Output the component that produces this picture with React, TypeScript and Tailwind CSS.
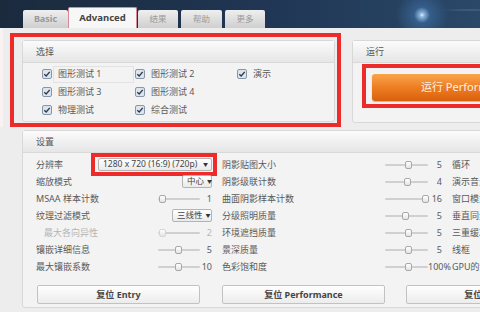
import React from 'react';

const FONT = "font-['Noto_Sans','Noto_Sans_CJK_SC',sans-serif]";

const Check = () => (
  <span className="flex h-[10px] w-[10px] shrink-0 items-center justify-center rounded-[2px] border border-[#8796a8] bg-[#dde4ec]">
    <svg viewBox="0 0 10 10" className="h-[8px] w-[8px]">
      <path d="M1.6 5.2 L4 7.4 L8.4 2.3" fill="none" stroke="#2b3a4f" strokeWidth="1.7" />
    </svg>
  </span>
);

type PanelProps = { title: string; className?: string; children?: React.ReactNode };

const Panel = ({ title, className = '', children }: PanelProps) => (
  <div className={`flex shrink-0 flex-col rounded-[3px] border border-[#d8d8d8] bg-[#f3f3f3] ${className}`}>
    <div className="flex h-[22px] shrink-0 items-center border-b border-[#d9d9d9] bg-gradient-to-b from-[#fbfbfb] to-[#e6e6e6] pl-[13px] text-[9px] text-[#555]">
      {title}
    </div>
    {children}
  </div>
);

const Slider = ({ track, pos, disabled }: { track: string; pos: number; disabled?: boolean }) => (
  <div className={`relative flex h-[10px] shrink-0 items-center ${track}`}>
    <div className="h-[2px] w-full rounded-full bg-[#d0d0d0]" />
    <div
      className={`absolute top-[1px] h-[8px] w-[7px] rounded-[2px] border bg-gradient-to-b from-white to-[#e4e4e4] ${disabled ? 'border-[#d5d5d5]' : 'border-[#a8a8a8]'}`}
      style={{ left: pos }}
    />
  </div>
);

const Dropdown = ({ text, w }: { text: string; w: string }) => (
  <div className={`flex h-[13px] shrink-0 items-center justify-between gap-[3px] whitespace-nowrap rounded-[2px] border border-[#b4b4b4] bg-gradient-to-b from-white to-[#eaeaea] pl-[4px] pr-[3px] text-[8.5px] text-[#444] ${w}`}>
    <span>{text}</span>
    <span className="text-[5px] text-[#333]">▼</span>
  </div>
);

type Col1 =
  | { label: string; kind: 'drop'; text: string; w: string; red?: boolean }
  | { label: string; kind: 'slider'; pos: number; value: string; disabled?: boolean };

const col1: Col1[] = [
  { label: '分辨率', kind: 'drop', text: '1280 x 720 (16:9) (720p)', w: 'w-[114px]', red: true },
  { label: '缩放模式', kind: 'drop', text: '中心', w: 'w-[30px]' },
  { label: 'MSAA 样本计数', kind: 'slider', pos: 1, value: '1' },
  { label: '纹理过滤模式', kind: 'drop', text: '三线性', w: 'w-[40px]' },
  { label: '最大各向异性', kind: 'slider', pos: 1, value: '2', disabled: true },
  { label: '镶嵌详细信息', kind: 'slider', pos: 17, value: '5' },
  { label: '最大镶嵌系数', kind: 'slider', pos: 17, value: '10' },
];

const col2 = [
  { label: '阴影贴图大小', pos: 20, value: '5' },
  { label: '阴影级联计数', pos: 19, value: '4' },
  { label: '曲面阴影样本计数', pos: 37, value: '16' },
  { label: '分级照明质量', pos: 17, value: '5' },
  { label: '环境遮挡质量', pos: 20, value: '5' },
  { label: '景深质量', pos: 20, value: '5' },
  { label: '色彩饱和度', pos: 20, value: '100%' },
];

const col3 = ['循环', '演示音量', '窗口模式', '垂直同步', '三重缓冲', '线框', 'GPU的计时'];

const TopBar = () => (
  <div className="flex h-[28px] items-end bg-[radial-gradient(circle_at_422px_15px,#eaf4ff_0px,#8fb8e0_2px,rgba(70,125,185,0.45)_8px,transparent_26px),radial-gradient(ellipse_at_470px_10px,rgba(120,150,170,0.45)_0px,transparent_30px),linear-gradient(90deg,#1b2a3d,#203654_55%,#2a4868)] pl-[23px]">
    <div className="flex h-[18px] w-[45px] items-center justify-center rounded-t-[2px] bg-gradient-to-b from-[#efefef] to-[#cfcfcf] text-[9px] font-bold text-[#9a9a9a]">
      Basic
    </div>
    <div className="flex h-[21px] w-[69px] items-center justify-center rounded-t-[2px] border border-b-0 border-[#d48a98] bg-[#f7f7f7] text-[9.5px] font-bold text-[#444]">
      Advanced
    </div>
    <div className="ml-[1px] flex h-[18px] w-[40px] items-center justify-center rounded-t-[2px] bg-gradient-to-b from-[#efefef] to-[#cfcfcf] text-[8.5px] text-[#9a9a9a]">
      结果
    </div>
    <div className="ml-[3px] flex h-[18px] w-[41px] items-center justify-center rounded-t-[2px] bg-gradient-to-b from-[#efefef] to-[#cfcfcf] text-[8.5px] text-[#9a9a9a]">
      帮助
    </div>
    <div className="ml-[3px] flex h-[18px] w-[40px] items-center justify-center rounded-t-[2px] bg-gradient-to-b from-[#efefef] to-[#cfcfcf] text-[8.5px] text-[#9a9a9a]">
      更多
    </div>
  </div>
);

const ResetButton = ({ text, className = '' }: { text: string; className?: string }) => (
  <div className={`flex h-[19px] w-[163px] shrink-0 items-center justify-center rounded-[2px] border border-[#c2c2c2] bg-gradient-to-b from-white to-[#ececec] text-[9px] font-bold text-[#454545] ${className}`}>
    {text}
  </div>
);

export default function App() {
  return (
    <div className={`h-[312px] w-[480px] overflow-hidden bg-[#ededed] ${FONT}`}>
      <TopBar />
      <div className="flex items-start border-l-[3px] border-[#f8f2f2]">
        <div className="ml-[7px] mt-[5px] h-[94px] w-[331px] shrink-0 border-4 border-[#ee2b2b] pb-[1px] pl-[8px] pr-[2px] pt-[3px]">
          <Panel title="选择" className="h-full">
            <div className="flex flex-col pl-[19px] pt-[2px] text-[9px] text-[#5a5a5a]">
              <div className="flex h-[18px] items-center">
                <div className="flex w-[93px] items-center">
                  <Check />
                  <span className="ml-[1px] flex h-[17px] w-[81px] items-center border border-[#e2e2e2] pl-[4px]">图形测试 1</span>
                </div>
                <div className="flex w-[102px] items-center gap-[6px]">
                  <Check />
                  <span>图形测试 2</span>
                </div>
                <div className="flex items-center gap-[6px]">
                  <Check />
                  <span>演示</span>
                </div>
              </div>
              <div className="flex h-[18px] items-center">
                <div className="flex w-[93px] items-center gap-[6px]">
                  <Check />
                  <span>图形测试 3</span>
                </div>
                <div className="flex items-center gap-[6px]">
                  <Check />
                  <span>图形测试 4</span>
                </div>
              </div>
              <div className="flex h-[18px] items-center">
                <div className="flex w-[93px] items-center gap-[6px]">
                  <Check />
                  <span>物理测试</span>
                </div>
                <div className="flex items-center gap-[6px]">
                  <Check />
                  <span>综合测试</span>
                </div>
              </div>
            </div>
          </Panel>
        </div>
        <Panel title="运行" className="ml-[11px] mt-[12px] h-[83px] w-[200px]">
          <div className="ml-[9px] mt-[1px] h-[44px] border-4 border-[#ee2b2b] pl-[6px] pt-[6px]">
            <div className="flex h-[27px] w-[190px] items-center justify-center rounded-[3px] bg-gradient-to-b from-[#f8a54a] via-[#ee7d22] to-[#d9600c] text-[11px] text-[#fff1e6] shadow-[0_1px_1px_rgba(0,0,0,0.25)]">
              运行 Performance
            </div>
          </div>
        </Panel>
      </div>
      <Panel title="设置" className="ml-[22px] mt-[3px] h-[178px] w-[500px]">
        <div className="flex flex-col pl-[13px] pt-[3px] text-[9px] text-[#5a5a5a]">
          {col1.map((c, i) => (
            <div key={i} className="flex h-[17px] items-center">
              <div className="flex w-[176px] shrink-0 items-center justify-between">
                <span className={`whitespace-nowrap ${c.kind === 'slider' && c.disabled ? 'pl-[8px] text-[#b5b5b5]' : ''}`}>{c.label}</span>
                {c.kind === 'drop' ? (
                  <div className="relative">
                    <Dropdown text={c.text} w={c.w} />
                    {c.red && (
                      <div className="pointer-events-none absolute -bottom-[5px] -left-[7px] -right-[5px] -top-[5px] border-4 border-[#ee2b2b]" />
                    )}
                  </div>
                ) : (
                  <div className="flex items-center">
                    <Slider track="w-[42px]" pos={c.pos} disabled={c.disabled} />
                    <span className={`w-[12px] text-right ${c.disabled ? 'text-[#b5b5b5]' : ''}`}>{c.value}</span>
                  </div>
                )}
              </div>
              <div className="ml-[10px] flex w-[220px] shrink-0 items-center">
                <span className="flex-1 whitespace-nowrap">{col2[i].label}</span>
                <Slider track="w-[43px]" pos={col2[i].pos} />
                <span className={col2[i].value === '100%' ? 'w-[14px] whitespace-nowrap' : 'w-[14px] text-right'}>
                  {col2[i].value}
                </span>
              </div>
              <span className="ml-[10px] whitespace-nowrap">{col3[i]}</span>
            </div>
          ))}
          <div className="mt-[10px] flex items-center">
            <ResetButton text="复位 Entry" className="ml-[1px]" />
            <ResetButton text="复位 Performance" className="ml-[22px]" />
            <ResetButton text="复位 Demo" className="ml-[21px]" />
          </div>
        </div>
      </Panel>
    </div>
  );
}
